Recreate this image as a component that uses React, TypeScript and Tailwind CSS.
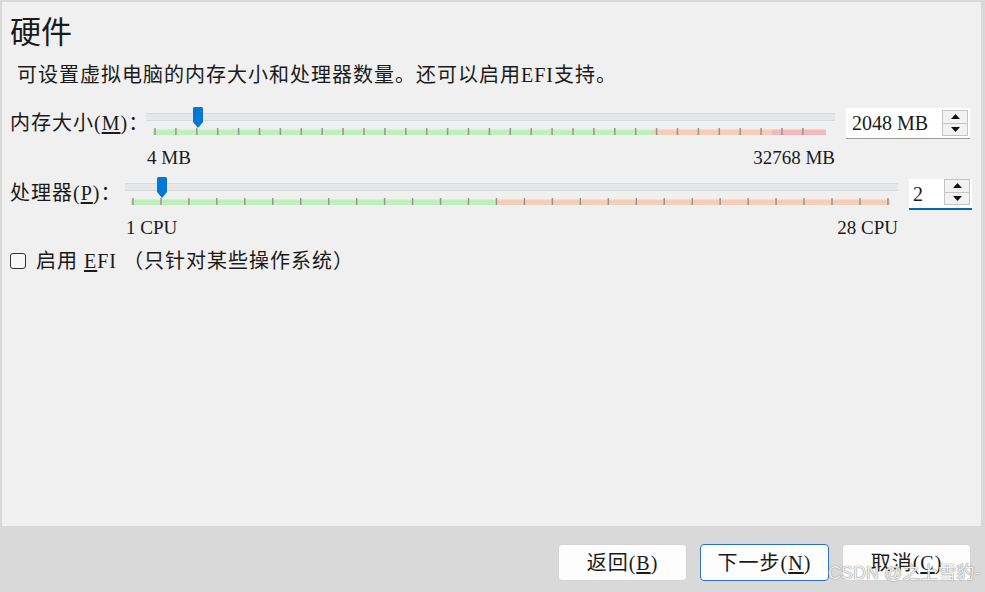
import React from 'react';

const serif = '"Liberation Serif", "Noto Sans CJK SC", serif';

type Zone = { from: number; to: number; color: string };

const Thumb = () => (
  <svg width="10" height="21" viewBox="0 0 10 21">
    <path d="M1.5 0 H8.5 Q10 0 10 1.5 V15 L5 21 L0 15 V1.5 Q0 0 1.5 0 Z" fill="#0078d7" />
  </svg>
);

const Slider = ({
  width,
  thumbX,
  tickStart,
  tickStep,
  tickCount,
  zones,
  minLabel,
  maxLabel,
}: {
  width: number;
  thumbX: number;
  tickStart: number;
  tickStep: number;
  tickCount: number;
  zones: Zone[];
  minLabel: string;
  maxLabel: string;
}) => {
  const ticks = Array.from({ length: tickCount }, (_, i) => tickStart + i * tickStep);
  return (
    <div className="relative shrink-0 flex flex-col" style={{ width }}>
      {/* groove */}
      <div className="mt-[6px] h-[8px] w-full bg-[#e6e7e8] border-y border-[#d8d9da]" />
      {/* coloured band + ticks */}
      <svg width={width} height="8" className="mt-[7px] block">
        {zones.map((z) => (
          <rect key={z.from} x={z.from} y="1.5" width={z.to - z.from} height="5.5" fill={z.color} />
        ))}
        {ticks.map((t) => (
          <rect key={t} x={t - 0.75} y="0" width="1.5" height="7" fill="#9a958c" />
        ))}
      </svg>
      <div
        className="mt-[12px] flex justify-between text-[19px] leading-none text-[#1a1a1a]"
        style={{ paddingLeft: 1 }}
      >
        <span>{minLabel}</span>
        <span>{maxLabel}</span>
      </div>
      <div className="absolute top-0" style={{ left: thumbX - 5 }}>
        <Thumb />
      </div>
    </div>
  );
};

const Arrows = () => (
  <div className="flex flex-col w-[26px] h-[26px] border border-[#c4c4c4] bg-[#f2f2f2]">
    <div className="flex-1 flex items-center justify-center border-b border-[#c4c4c4]">
      <svg width="9" height="5" viewBox="0 0 9 5">
        <path d="M0 5 L4.5 0 L9 5 Z" fill="#111" />
      </svg>
    </div>
    <div className="flex-1 flex items-center justify-center">
      <svg width="9" height="5" viewBox="0 0 9 5">
        <path d="M0 0 L4.5 5 L9 0 Z" fill="#111" />
      </svg>
    </div>
  </div>
);

const Button = ({ label, mn, active }: { label: string; mn: string; active?: boolean }) => (
  <div
    className={`w-[129px] h-[37px] rounded-[4px] bg-[#fdfdfd] flex items-center justify-center text-[20px] tracking-[1px] leading-none text-[#1a1a1a] border ${
      active ? 'border-[#2a73c9]' : 'border-[#d4d4d4]'
    }`}
  >
    {label}(<u className="underline-offset-2">{mn}</u>)
  </div>
);

export default function App() {
  return (
    <div
      className="relative w-[985px] h-[592px] bg-[#d9d9d9] flex flex-col overflow-hidden text-[#1a1a1a]"
      style={{ fontFamily: serif }}
    >
      <div className="ml-[2px] mt-[2px] w-[979px] h-[524px] bg-[#f0f0f0] flex flex-col pl-[8px]">
        <div
          className="mt-[12px] text-[31px] leading-none"
          style={{ fontFamily: '"Noto Sans CJK SC", sans-serif' }}
        >
          硬件
        </div>
        <div className="mt-[20px] ml-[7px] text-[20px] tracking-[1px] leading-none">
          可设置虚拟电脑的内存大小和处理器数量。还可以启用EFI支持。
        </div>

        {/* memory */}
        <div className="mt-[22px] flex items-start">
          <div className="w-[136px] shrink-0 whitespace-nowrap mt-[6px] text-[20px] tracking-[1px] leading-none">
            内存大小(<u className="underline-offset-2">M</u>)：
          </div>
          <Slider
            width={689}
            thumbX={52}
            tickStart={9}
            tickStep={20.9}
            tickCount={32}
            zones={[
              { from: 7, to: 507, color: '#bdf0bd' },
              { from: 507, to: 626, color: '#f6cdb8' },
              { from: 626, to: 680, color: '#f5b9b9' },
            ]}
            minLabel="4 MB"
            maxLabel="32768 MB"
          />
          <div className="ml-[11px] mt-[1px] w-[124px] h-[31px] shrink-0 bg-white border-b border-[#9a9a9a] flex items-center justify-between pl-[6px] pr-[2px]">
            <span className="text-[20px] leading-none">2048 MB</span>
            <Arrows />
          </div>
        </div>

        {/* cpu */}
        <div className="mt-[10px] flex items-start">
          <div className="w-[115px] shrink-0 whitespace-nowrap mt-[6px] text-[20px] tracking-[1px] leading-none">
            处理器(<u className="underline-offset-2">P</u>)：
          </div>
          <Slider
            width={773}
            thumbX={37}
            tickStart={8}
            tickStep={27.96}
            tickCount={28}
            zones={[
              { from: 6, to: 373, color: '#bdf0bd' },
              { from: 373, to: 765, color: '#f6cdb8' },
            ]}
            minLabel="1 CPU"
            maxLabel="28 CPU"
          />
          <div className="ml-[11px] mt-[2px] w-[63px] h-[31px] shrink-0 bg-white border-b-2 border-[#0067c0] flex items-start justify-between pl-[4px] pr-[2px]">
            <span className="mt-[5px] text-[20px] leading-none">2</span>
            <Arrows />
          </div>
        </div>

        {/* efi */}
        <div className="mt-[14px] flex items-center">
          <div className="w-[16px] h-[16px] rounded-[3px] border border-[#333] bg-[#f7f7f7]" />
          <div className="ml-[10px] text-[20px] tracking-[1px] leading-none">
            启用 <u className="underline-offset-2">E</u>FI （只针对某些操作系统）
          </div>
        </div>
      </div>

      <div className="flex-1 flex justify-end items-start pt-[18px] pr-[14px] gap-[13px]">
        <Button label="返回" mn="B" />
        <Button label="下一步" mn="N" active />
        <Button label="取消" mn="C" />
      </div>

      <div
        className="absolute left-[828px] top-[564px] text-[18px] leading-none text-[#efefef] [text-shadow:0_0_1px_#8a8a8a,0_0_1px_#8a8a8a]"
        style={{ fontFamily: '"Liberation Sans", "Noto Sans CJK SC", sans-serif' }}
      >
        CSDN @之上雪豹-
      </div>
    </div>
  );
}
